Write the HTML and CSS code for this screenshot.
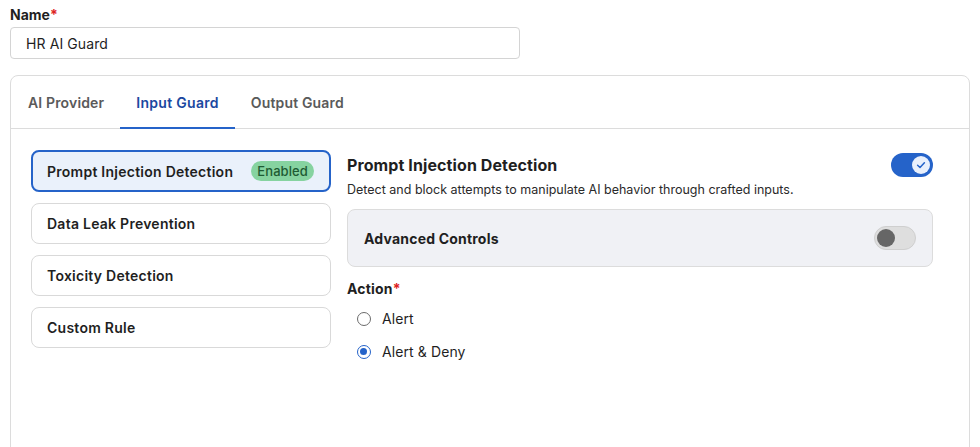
FILE: index.html
```html
<!DOCTYPE html>
<html>
<head>
<meta charset="utf-8">
<link rel="stylesheet" href="styles.css">
</head>
<body>
<div class="page">
  <label class="field-label">Name<span class="req">*</span></label>
  <div class="text-input">HR AI Guard</div>

  <div class="card">
    <div class="tabs">
      <div class="tab">AI Provider</div>
      <div class="tab active">Input Guard</div>
      <div class="tab">Output Guard</div>
    </div>
    <div class="card-body">
      <div class="guard-list">
        <div class="guard-item selected"><span>Prompt Injection Detection</span><span class="badge">Enabled</span></div>
        <div class="guard-item"><span>Data Leak Prevention</span></div>
        <div class="guard-item"><span>Toxicity Detection</span></div>
        <div class="guard-item"><span>Custom Rule</span></div>
      </div>
      <div class="detail">
        <div class="detail-head">
          <h2 class="detail-title">Prompt Injection Detection</h2>
          <div class="switch on">
            <div class="knob">
              <svg width="12" height="12" viewBox="0 0 12 12"><path d="M2.6 6.3 L5 8.5 L9.4 3.7" fill="none" stroke="#2563c9" stroke-width="1.5" stroke-linecap="round" stroke-linejoin="round"/></svg>
            </div>
          </div>
        </div>
        <p class="detail-desc">Detect and block attempts to manipulate AI behavior through crafted inputs.</p>
        <div class="adv-box">
          <span class="adv-title">Advanced Controls</span>
          <div class="switch off"><div class="knob"></div></div>
        </div>
        <div class="action-label">Action<span class="req">*</span></div>
        <div class="radio-group">
          <div class="radio-row"><span class="radio"></span><span>Alert</span></div>
          <div class="radio-row"><span class="radio checked"></span><span>Alert &amp; Deny</span></div>
        </div>
      </div>
    </div>
  </div>
</div>
</body>
</html>
```

FILE: styles.css
```css
* { box-sizing: border-box; }
html, body { margin: 0; padding: 0; background: #fff; }
body {
  font-family: Inter, "Noto Sans", "Liberation Sans", sans-serif;
  color: #1f1f1f;
  font-size: 14px;
}
.page { padding: 7px 10px 0 10px; }
.field-label {
  display: block;
  font-size: 14px;
  font-weight: 700;
  line-height: 16px;
  margin-bottom: 4px;
}
.req { color: #d22; }
.text-input {
  width: 510px;
  height: 32px;
  border: 1px solid #d4d4d4;
  border-radius: 4px;
  padding: 0 15px;
  display: flex;
  align-items: center;
  font-size: 14px;
  color: #1f1f1f;
  letter-spacing: 0.1px;
}
.card {
  margin-top: 16px;
  width: 960px;
  height: 400px;
  border: 1px solid #dcdcdc;
  border-radius: 8px;
}
.tabs {
  display: flex;
  height: 53px;
  border-bottom: 1px solid #dcdcdc;
  padding-left: 1px;
}
.tab {
  padding: 0 16px;
  display: flex;
  align-items: center;
  font-size: 14px;
  font-weight: 600;
  letter-spacing: 0.15px;
  color: #5a5a5a;
  border-bottom: 2px solid transparent;
  margin-bottom: -1px;
  padding-top: 1px;
}
.tab.active {
  color: #1b48a0;
  letter-spacing: 0.3px;
  border-bottom-color: #2563c9;
}
.card-body {
  display: flex;
  padding: 21px 20px 0 20px;
  gap: 16px;
}
.guard-list {
  width: 300px;
  display: flex;
  flex-direction: column;
  gap: 11px;
}
.guard-item {
  height: 41px;
  border: 1px solid #d9d9d9;
  border-radius: 8px;
  padding: 0 15px;
  display: flex;
  align-items: center;
  justify-content: space-between;
  font-size: 14px;
  font-weight: 600;
  letter-spacing: 0.25px;
  color: #1f1f1f;
}
.guard-item.selected {
  height: 42px;
  border: 2px solid #2563c9;
  background: #eaf1fb;
  padding: 0 15px 0 14px;
}
.badge {
  background: #86d3a0;
  color: #1e5b33;
  font-weight: 500;
  font-size: 13px;
  letter-spacing: 0.1px;
  border-radius: 10px;
  padding: 0 6px;
  height: 20px;
  line-height: 20px;
}
.detail {
  width: 586px;
  display: flex;
  flex-direction: column;
}
.detail-head {
  display: flex;
  align-items: center;
  justify-content: space-between;
  height: 24px;
  margin-top: 3px;
}
.detail-title {
  margin: 0;
  font-size: 16px;
  font-weight: 700;
  letter-spacing: 0.1px;
}
.detail-desc {
  margin: 5px 0 0 0;
  font-size: 12.5px;
  line-height: 16px;
  color: #2a2a2a;
}
.switch {
  width: 42px;
  height: 24px;
  border-radius: 12px;
  display: flex;
  align-items: center;
  padding: 0 3px;
}
.switch.on {
  background: #2563c9;
  justify-content: flex-end;
}
.switch.off {
  background: #dedede;
  border: 1px solid #cfcfcf;
  padding: 0 2px;
}
.knob {
  width: 18px;
  height: 18px;
  border-radius: 50%;
  display: flex;
  align-items: center;
  justify-content: center;
}
.switch.on .knob { background: #e9f0fc; }
.switch.off .knob { background: #666; }
.adv-box {
  margin-top: 11px;
  height: 58px;
  background: #f0f1f5;
  border: 1px solid #dcdcdc;
  border-radius: 8px;
  display: flex;
  align-items: center;
  justify-content: space-between;
  padding: 0 16px;
}
.adv-title {
  font-size: 14px;
  font-weight: 700;
  letter-spacing: 0.2px;
}
.action-label {
  margin-top: 13px;
  font-size: 14px;
  font-weight: 700;
  line-height: 18px;
  letter-spacing: 0.2px;
}
.radio-group {
  margin-top: 4px;
  display: flex;
  flex-direction: column;
}
.radio-row {
  display: flex;
  align-items: center;
  gap: 11px;
  height: 33px;
  padding-left: 10px;
  font-size: 14px;
  letter-spacing: 0.1px;
}
.radio {
  width: 14px;
  height: 14px;
  border-radius: 50%;
  border: 1.5px solid #6b6b6b;
  background: #fff;
  position: relative;
}
.radio.checked {
  border-color: #2563c9;
}
.radio.checked::after {
  content: "";
  position: absolute;
  left: 2px;
  top: 2px;
  width: 7px;
  height: 7px;
  border-radius: 50%;
  background: #2563c9;
}
```
